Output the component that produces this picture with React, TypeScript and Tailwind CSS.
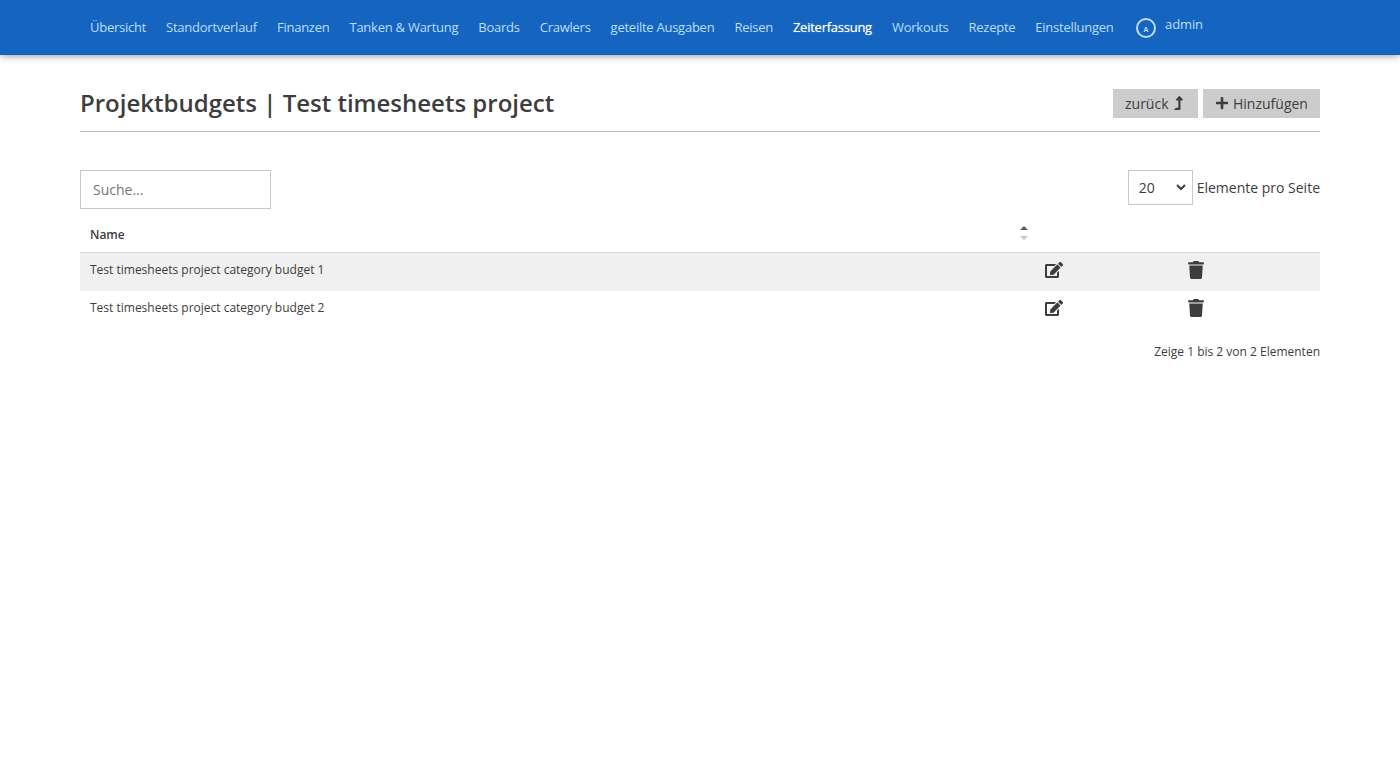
import { FaEdit, FaLevelUpAlt, FaPlus, FaTrash } from 'react-icons/fa';

const navItems = [
  { label: 'Übersicht' },
  { label: 'Standortverlauf' },
  { label: 'Finanzen' },
  { label: 'Tanken & Wartung' },
  { label: 'Boards' },
  { label: 'Crawlers' },
  { label: 'geteilte Ausgaben' },
  { label: 'Reisen' },
  { label: 'Zeiterfassung', active: true },
  { label: 'Workouts' },
  { label: 'Rezepte' },
  { label: 'Einstellungen' },
];

const budgets = ['Test timesheets project category budget 1', 'Test timesheets project category budget 2'];

function Navigation() {
  return (
    <header className="h-[55px] bg-[#1565c0] shadow-[0_0_8px_rgba(0,0,0,0.5)]">
      <nav className="mx-auto flex h-full w-[1240px] items-center pb-[2px] pl-[10px] text-[13px] leading-[18px] tracking-[-0.252px] text-[#bbdefb]">
        <ul className="flex gap-5 whitespace-nowrap">
          {navItems.map((item) => (
            <li key={item.label}>
              <a href="#" className={item.active ? 'text-white [text-shadow:0_0_1px_rgba(255,255,255,0.6)]' : ''}>
                {item.label}
              </a>
            </li>
          ))}
        </ul>
        <a href="#" className="ml-[22.5px] flex items-start">
          <span className="mt-[2px] flex size-5 items-center justify-center rounded-full border-2 border-[#bbdefb] pt-[3px] text-[7px] leading-none font-bold tracking-normal">
            A
          </span>
          <span className="-mt-[1px] ml-[9px] tracking-[-0.1px]">admin</span>
        </a>
      </nav>
    </header>
  );
}

export default function App() {
  return (
    <div className="min-h-screen bg-white font-['Open_Sans',sans-serif] text-[#3d3d3d]">
      <Navigation />
      <main className="mx-auto w-[1240px] pt-[34px]">
        <div className="flex h-[43px] justify-between border-b border-[#bdbdbd]">
          <h1 className="-mt-[2px] text-[24px] leading-[32px] font-semibold">Projektbudgets | Test timesheets project</h1>
          <div className="flex h-[29px] gap-[5px] text-[14px]">
            <a href="#" className="flex w-[85px] items-center bg-[#cccccc] pl-3">
              zurück
              <FaLevelUpAlt className="mb-px ml-[5px] h-[14px] w-[9px]" />
            </a>
            <a href="#" className="flex w-[117px] items-center bg-[#cccccc] pl-3">
              <FaPlus className="mr-1 mb-px size-[14px]" />
              Hinzufügen
            </a>
          </div>
        </div>

        <div className="mt-[38px] flex items-start justify-between text-[14px]">
          <input
            type="text"
            placeholder="Suche..."
            className="h-[39px] w-[191px] border border-[#c8c8c8] px-3 placeholder:text-[#757575]"
          />
          <label className="flex items-center">
            <span className="mr-1 flex h-[35px] w-[65px] items-center justify-between border border-[#c8c8c8] pr-[6px] pl-[10px]">
              20
              <svg viewBox="0 0 10 7" className="h-[7px] w-[10px]" fill="none" stroke="currentColor" strokeWidth="2">
                <path d="M1 1l4 4 4-4" />
              </svg>
            </span>
            Elemente pro Seite
          </label>
        </div>

        <table className="mt-2 w-full table-fixed border-separate border-spacing-0 text-left text-[12px] leading-[18px]">
          <colgroup>
            <col className="w-[955px]" />
            <col className="w-[143px]" />
            <col className="w-[142px]" />
          </colgroup>
          <thead>
            <tr className="h-9">
              <th className="border-b border-[#d6d6d6] px-[10px] font-semibold">
                <div className="flex items-center justify-between">
                  Name
                  <svg viewBox="0 0 8 14" className="mt-[-3px] mr-[-3px] h-[14px] w-2">
                    <path d="M0 4l4-4 4 4z" fill="#5c5c5c" />
                    <path d="M0 10h8l-4 4z" fill="#c4c4c4" />
                  </svg>
                </div>
              </th>
              <th className="border-b border-[#d6d6d6]" />
              <th className="border-b border-[#d6d6d6]" />
            </tr>
          </thead>
          <tbody>
            {budgets.map((budget) => (
              <tr key={budget} className="h-[38px] odd:bg-[#f0f0f0]">
                <td className="px-[10px] pb-1">{budget}</td>
                <td className="px-[10px] pb-1">
                  <FaEdit className="h-4 w-[18px]" />
                </td>
                <td className="px-[10px] pb-1">
                  <FaTrash className="h-[18px] w-4" />
                </td>
              </tr>
            ))}
          </tbody>
        </table>
        <p className="mt-[14px] text-right text-[12px] leading-[18px]">Zeige 1 bis 2 von 2 Elementen</p>
      </main>
    </div>
  );
}
